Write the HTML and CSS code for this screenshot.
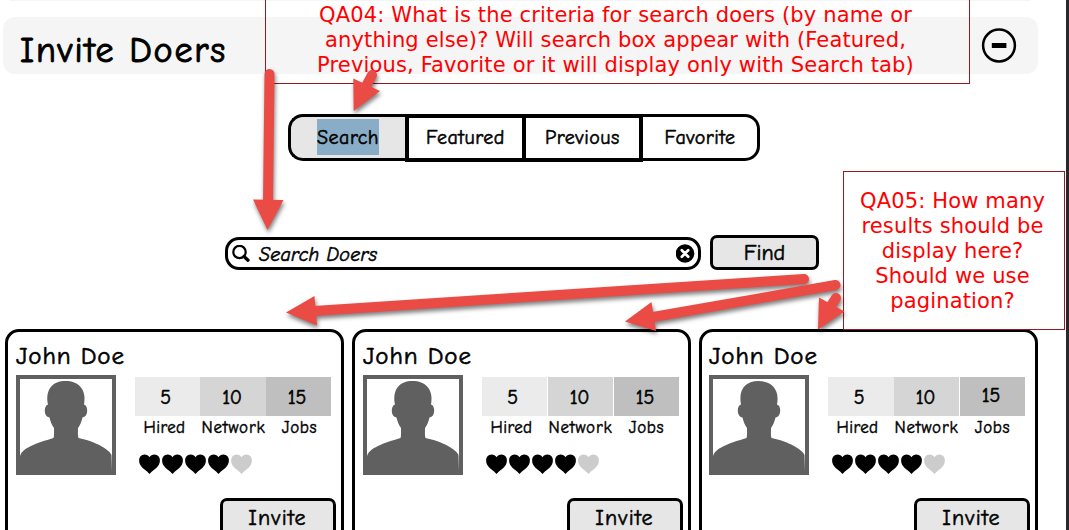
FILE: index.html
```html
<!DOCTYPE html>
<html lang="en">
<head>
<meta charset="utf-8">
<title>Invite Doers</title>
<link rel="stylesheet" href="styles.css">
</head>
<body>
<svg class="defs" width="0" height="0" aria-hidden="true">
  <symbol id="person" viewBox="0 0 100 100">
    <path d="M0 0h100v100H0z" fill="#606060"/>
    <path d="M4 4h92v92H4z" fill="#fff"/>
    <path d="M4 97V82C5 73 21 68 37.500 63 38.300 61 38 57 38 53c-2.500-3-3.500-7-4.500-10.500-6-.5-6-12-1.500-13C29 14 37 6 49.500 6S71 14 68 29.500c4.500 1 4.500 12.500-1.500 13C65.500 46 64.500 50 62 53c0 4-.3 8 .5 10C79 66 94 75 95.500 80L96 97z" fill="#606060"/>
  </symbol>
  <symbol id="heart" viewBox="0 0 21 20">
    <path d="M10.500 3.200C8.500-.4 3.500-.3 1.300 2.500-.5 5 0 8.500 1.300 11c2 3.500 6.200 5.500 9.200 9 3-3.500 7.200-5.500 9.200-9 1.300-2.500 1.800-6 0-8.500C17.500-.3 12.500-.4 10.500 3.200z" fill="currentColor"/>
  </symbol>
</svg>
<main class="page">
  <div class="previous-panel"></div>
  <header class="panel-head">
    <h1 class="panel-title">Invite Doers</h1>
    <svg class="collapse" width="36" height="36" viewBox="0 0 36 36"><circle cx="18" cy="17.500" r="15.900" fill="none" stroke="#000" stroke-width="2.500"/><path d="M10.800 15h14.600v5H10.800z"/></svg>
  </header>
  <nav class="tabs">
    <span class="tab tab-first"><mark class="selected">Search</mark></span>
    <span class="tab tab-mid">Featured</span>
    <span class="tab tab-mid tab-joined">Previous</span>
    <span class="tab tab-last">Favorite</span>
  </nav>
  <div class="search-row">
    <div class="search-box">
      <svg width="18" height="18" viewBox="0 0 18 18"><circle cx="7.500" cy="7" r="6.200" fill="none" stroke="#000" stroke-width="2.200"/><path d="M12 11.500l4 3.700" stroke="#000" stroke-width="3.300" stroke-linecap="round"/></svg>
      <span class="placeholder">Search Doers</span>
      <svg width="19" height="19" viewBox="0 0 19 19"><circle cx="9" cy="9.500" r="9.300"/><path d="M5.800 6.300l6.400 6.400M12.200 6.300l-6.400 6.400" stroke="#fff" stroke-width="2.700" stroke-linecap="round"/></svg>
    </div>
    <div class="button find">Find</div>
  </div>
  <section class="cards">
    <article class="card">
      <h2 class="name">John Doe</h2>
      <div class="profile">
        <svg class="avatar" width="100" height="100"><use href="#person"/></svg>
        <div class="details">
          <div class="stats"><span class="stat hired">5</span><span class="stat network wide">10</span><span class="stat jobs">15</span></div>
          <div class="labels"><span class="label-hired">Hired</span><span class="label-network">Network</span><span class="label-jobs">Jobs</span></div>
          <div class="rating"><svg class="heart"><use href="#heart"/></svg><svg class="heart"><use href="#heart"/></svg><svg class="heart"><use href="#heart"/></svg><svg class="heart"><use href="#heart"/></svg><svg class="heart empty"><use href="#heart"/></svg></div>
        </div>
      </div>
      <div class="button invite">Invite</div>
    </article>
    <article class="card">
      <h2 class="name">John Doe</h2>
      <div class="profile">
        <svg class="avatar" width="100" height="100"><use href="#person"/></svg>
        <div class="details">
          <div class="stats spaced"><span class="stat hired">5</span><span class="stat network">10</span><span class="stat jobs">15</span></div>
          <div class="labels"><span class="label-hired">Hired</span><span class="label-network">Network</span><span class="label-jobs">Jobs</span></div>
          <div class="rating"><svg class="heart"><use href="#heart"/></svg><svg class="heart"><use href="#heart"/></svg><svg class="heart"><use href="#heart"/></svg><svg class="heart"><use href="#heart"/></svg><svg class="heart empty"><use href="#heart"/></svg></div>
        </div>
      </div>
      <div class="button invite">Invite</div>
    </article>
    <article class="card card-last">
      <h2 class="name">John Doe</h2>
      <div class="profile">
        <svg class="avatar" width="100" height="100"><use href="#person"/></svg>
        <div class="details">
          <div class="stats"><span class="stat hired wide">5</span><span class="stat network">10</span><span class="stat jobs raised">15</span></div>
          <div class="labels"><span class="label-hired">Hired</span><span class="label-network">Network</span><span class="label-jobs">Jobs</span></div>
          <div class="rating"><svg class="heart"><use href="#heart"/></svg><svg class="heart"><use href="#heart"/></svg><svg class="heart"><use href="#heart"/></svg><svg class="heart"><use href="#heart"/></svg><svg class="heart empty"><use href="#heart"/></svg></div>
        </div>
      </div>
      <div class="button invite">Invite</div>
    </article>
  </section>
  <aside class="note note-search">QA04: What is the criteria for search doers (by name or<br>anything else)? Will search box appear with (Featured,<br>Previous, Favorite or it will display only with Search tab)</aside>
  <aside class="note note-results">QA05: How many<br>results should be<br>display here?<br>Should we use<br>pagination?</aside>
  <svg class="arrows" width="1069" height="530" viewBox="0 0 1069 530">
    <g class="arrow"><path class="shaft" d="M269.500 74L268 202"/><path d="M253 199.500L283.500 200 267.500 230z"/></g>
    <g class="arrow"><path class="shaft" d="M372 75L364 90"/><path d="M353.300 78.500L380 91 353.700 111z"/></g>
    <g class="arrow"><path class="shaft" d="M804 279L314 311"/><path d="M286 312.500L314.500 296 317 325.500z"/></g>
    <g class="arrow"><path class="shaft" d="M835.500 285L653 317"/><path d="M625 321.500L651.500 302 656 331z"/></g>
    <g class="arrow"><path class="shaft" d="M836 298L829 309"/><path d="M819 297.500L844.500 311.500 818 329.500z"/></g>
  </svg>
</main>
</body>
</html>
```
FILE: styles.css
```css
* { box-sizing: border-box; }
body {
  margin: 0;
  background: #fff;
  color: #000;
  font-family: "Comic Sans MS", "Comic Neue", Lato, sans-serif;
  -webkit-text-stroke: .55px currentColor;
}
.defs { position: absolute; }
.page {
  position: relative;
  width: 1069px;
  height: 530px;
  overflow: hidden;
  border-right: 3px solid #28282a;
}
.previous-panel { width: 1020px; height: 1px; margin-left: 10px; background: #f5f5f5; }
.panel-head {
  display: flex;
  align-items: center;
  justify-content: space-between;
  width: 1035px;
  height: 57px;
  margin: 16px 0 0 3px;
  padding: 0 21px 0 17px;
  border-radius: 12px;
  background: #f5f5f5;
}
.panel-title { margin: 10px 0 0; font-size: 36px; line-height: 42px; font-weight: 400; letter-spacing: 1.800px; -webkit-text-stroke-width: 1px; }
.tabs { display: flex; width: 472px; height: 48px; margin: 40px 0 0 288px; font-size: 20px; letter-spacing: .5px; }
.tab { display: flex; align-items: center; justify-content: center; border: 3px solid #000; }
.tab-first { width: 117px; height: 47px; border-right: 0; border-radius: 15px 0 0 15px; background: #e6e6e6; }
.tab-mid { width: 121px; border-width: 4px; padding-bottom: 1px; }
.tab-joined { width: 117px; border-left: 0; }
.tab-last { width: 117px; height: 47px; border-left: 0; border-radius: 0 15px 15px 0; }
.selected { width: 62px; height: 36px; margin-bottom: 2px; line-height: 37px; text-align: center; background: #8aadc7; color: #000; }
.search-row { display: flex; align-items: flex-end; gap: 9px; margin: 73px 0 0 225px; }
.search-box {
  display: flex;
  align-items: center;
  width: 476px;
  height: 33px;
  padding: 0 3px 0 4px;
  border: 3px solid #000;
  border-radius: 14px;
}
.placeholder { flex: 1; margin: 2px 0 0 9px; font-size: 20px; line-height: 27px; font-style: italic; letter-spacing: .25px; }
.button {
  display: flex;
  align-items: center;
  justify-content: center;
  border: 3px solid #000;
  border-radius: 7px;
  background: #e6e6e6;
  font-size: 22px;
  letter-spacing: .6px;
}
.find { width: 109px; height: 35px; padding-top: 1px; letter-spacing: 0; }
.cards { display: flex; gap: 8px; margin: 59px 0 0 5px; }
.card { width: 339px; height: 230px; padding: 8px 5.500px 0 8px; border: 3px solid #000; border-radius: 14px; }
.card-last { padding-left: 7px; }
.name { margin: 0; font-size: 25px; line-height: 32px; height: 35px; font-weight: 400; letter-spacing: .9px; -webkit-text-stroke-width: .6px; }
.profile { display: flex; gap: 19px; height: 123px; }
.avatar { flex: none; }
.details { padding-top: 2px; }
.stats { display: flex; height: 39px; font-size: 20px; letter-spacing: -.2px; }
.spaced { gap: 1px; }
.stat { width: 65px; padding: 9px 4px 0 0; line-height: 24px; text-align: center; }
.wide { width: 66px; }
.hired { background: #ebebeb; }
.network { padding-right: 2px; background: #d5d5d5; }
.jobs { padding-right: 3px; background: #bfbfbf; }
.raised { margin-left: 1px; padding-top: 7px; }
.labels { display: flex; margin-top: 1px; font-size: 17px; line-height: 22px; letter-spacing: .35px; text-align: center; -webkit-text-stroke-width: .45px; }
.label-hired { width: 59px; }
.label-network { width: 79px; letter-spacing: .8px; }
.label-jobs { width: 53px; letter-spacing: .7px; }
.rating { display: flex; gap: 2px; margin: 15px 0 0 4px; }
.heart { width: 21px; height: 20px; }
.empty { color: #ccc; }
.invite { width: 116px; height: 40px; margin-left: auto; letter-spacing: 1.100px; }
.note {
  position: absolute;
  border: 1px solid #901c20;
  color: #f00;
  font-family: "DejaVu Sans", sans-serif;
  font-size: 21px;
  line-height: 25px;
  letter-spacing: .15px;
  text-align: center;
  white-space: nowrap;
  -webkit-text-stroke: 0;
}
.note-search { left: 265px; top: -10px; width: 705px; height: 94px; padding: 12px 4px 0 0; }
.note-results { left: 843px; top: 171px; width: 222px; height: 159px; padding: 17px 3px 0 0; }
.arrows { position: absolute; left: 0; top: 0; }
.arrow { fill: #ea4b45; filter: drop-shadow(1px 3px 2px rgba(0, 0, 0, .5)); }
.shaft { fill: none; stroke: #ea4b45; stroke-width: 10px; stroke-linecap: round; }
```
